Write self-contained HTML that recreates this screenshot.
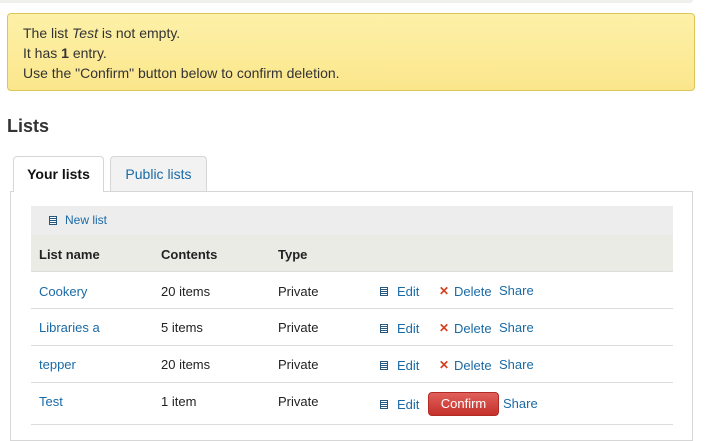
<!DOCTYPE html>
<html><head><meta charset="utf-8"><style>
body{margin:0;width:705px;height:432px;overflow:hidden;background:#fff;font-family:"Liberation Sans",Arial,sans-serif;font-size:13px;color:#222;position:relative}
.abs{position:absolute}
a{color:#1a6aa6;text-decoration:none}
.strip{left:0;top:0;width:693px;height:3px;background:#efefec;border-radius:0 0 3px 0}
.alert{left:7px;top:13px;width:686px;height:76px;background:linear-gradient(#fdf1a8,#fbe68c);border:1px solid #dcc659;border-radius:4px}
.alert div{position:absolute;left:15px;line-height:20px;font-size:14px;color:#333}
h2{position:absolute;left:7px;top:116px;margin:0;font-size:18px;font-weight:bold;color:#333}
.tab{top:156px;height:35px;border:1px solid #d6d6d6;border-bottom:none;border-radius:4px 4px 0 0;box-sizing:border-box;line-height:34px;text-align:center;font-size:14px}
.panel{left:10px;top:191px;width:683px;height:250px;border:1px solid #d6d6d6;box-sizing:border-box}
.tb{left:31px;top:206px;width:642px;height:29px;background:#ededed}
.hd{left:31px;top:235px;width:642px;height:37px;background:#ebebe6;border-bottom:1px solid #dcdcdc;box-sizing:border-box}
.row{left:31px;width:642px;height:37px;border-bottom:1px solid #dcdcdc;box-sizing:border-box}
.t{position:absolute;white-space:nowrap}
b.t{font-weight:bold;color:#222}
.ic{position:absolute;width:8px;height:9px;border:1px solid #25577f;box-sizing:border-box;background:repeating-linear-gradient(#fff 0 1px,#25577f 1px 2px)}
.x{position:absolute;color:#d4401f;font-weight:bold;font-size:12px}
.btn{position:absolute;left:428px;top:392px;width:71px;height:24px;background:linear-gradient(#e0605b,#c5302a);border:1px solid #b12a25;box-sizing:border-box;border-radius:4px;color:#fff;text-align:center;line-height:22px;font-size:13px}
</style></head><body>
<div class="abs strip"></div>
<div class="abs alert">
<div style="top:9px">The list <i>Test</i> is not empty.</div>
<div style="top:29px">It has <b>1</b> entry.</div>
<div style="top:49px">Use the "Confirm" button below to confirm deletion.</div>
</div>
<h2>Lists</h2>
<div class="abs panel"></div>
<div class="abs tab" style="left:13px;width:91px;background:#fff;height:36px;color:#111;font-weight:bold">Your lists</div>
<div class="abs tab" style="left:110px;width:97px;background:#f2f2f2"><a>Public lists</a></div>
<div class="abs tb"><span class="ic" style="left:18px;top:10px"></span><a class="t" style="left:34px;top:7px;font-size:12px">New list</a></div>
<div class="abs hd"><b class="t" style="left:8px;top:12px">List name</b><b class="t" style="left:130px;top:12px">Contents</b><b class="t" style="left:247px;top:12px">Type</b></div>

<div class="abs row" style="top:272px"><a class="t" style="left:8px;top:12px">Cookery</a><span class="t" style="left:130px;top:12px">20 items</span><span class="t" style="left:247px;top:12px">Private</span>
<span class="ic" style="left:349px;top:15px"></span><a class="t" style="left:366px;top:12px">Edit</a><span class="x" style="left:408px;top:12px">✕</span><a class="t" style="left:423px;top:12px">Delete</a><a class="t" style="left:468px;top:11px">Share</a></div>
<div class="abs row" style="top:309px"><a class="t" style="left:8px;top:11px">Libraries a</a><span class="t" style="left:130px;top:11px">5 items</span><span class="t" style="left:247px;top:11px">Private</span>
<span class="ic" style="left:349px;top:15px"></span><a class="t" style="left:366px;top:12px">Edit</a><span class="x" style="left:408px;top:12px">✕</span><a class="t" style="left:423px;top:12px">Delete</a><a class="t" style="left:468px;top:11px">Share</a></div>
<div class="abs row" style="top:346px"><a class="t" style="left:8px;top:11px">tepper</a><span class="t" style="left:130px;top:11px">20 items</span><span class="t" style="left:247px;top:11px">Private</span>
<span class="ic" style="left:349px;top:15px"></span><a class="t" style="left:366px;top:12px">Edit</a><span class="x" style="left:408px;top:12px">✕</span><a class="t" style="left:423px;top:12px">Delete</a><a class="t" style="left:468px;top:11px">Share</a></div>
<div class="abs row" style="top:383px;height:42px"><a class="t" style="left:8px;top:11px">Test</a><span class="t" style="left:130px;top:11px">1 item</span><span class="t" style="left:247px;top:11px">Private</span>
<span class="ic" style="left:349px;top:17px"></span><a class="t" style="left:366px;top:14px">Edit</a><a class="t" style="left:472px;top:13px">Share</a></div>
<div class="btn">Confirm</div>
</body></html>
